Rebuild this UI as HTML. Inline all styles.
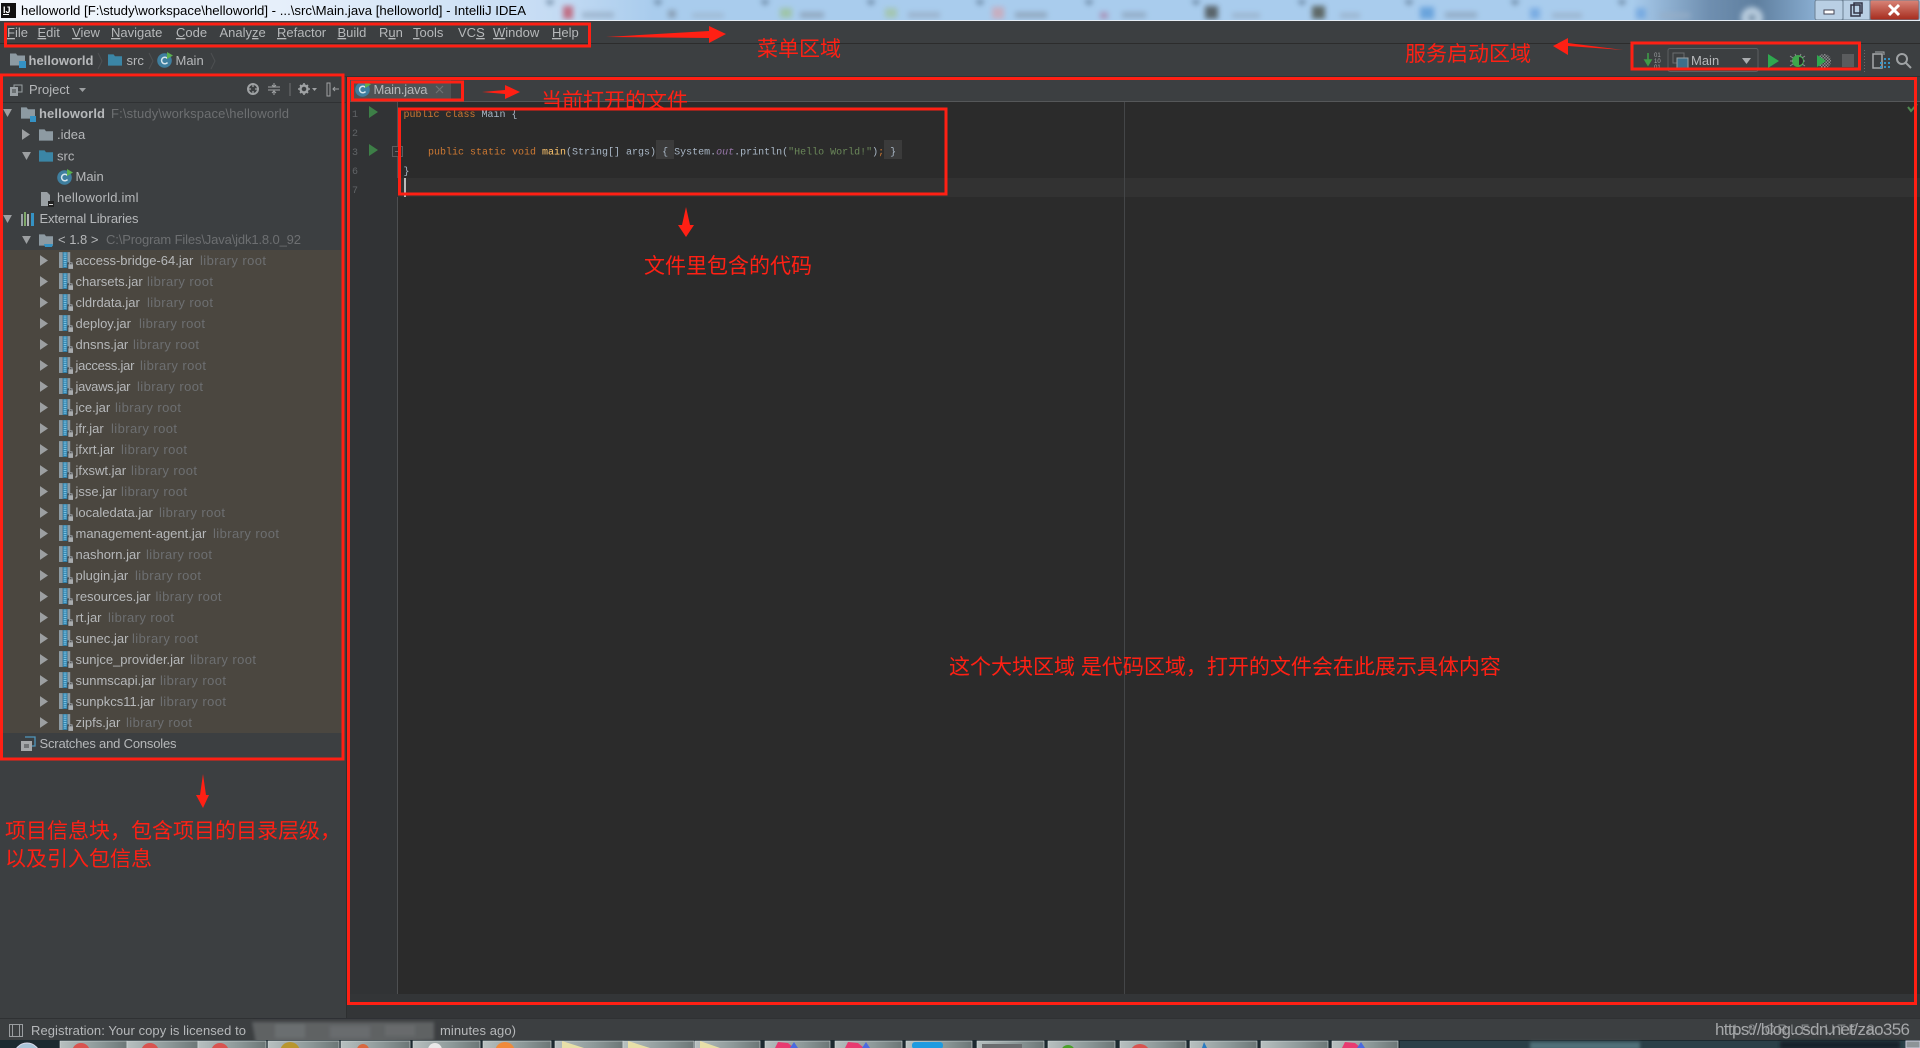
<!DOCTYPE html>
<html lang="zh-CN"><head><meta charset="utf-8"><title>IntelliJ IDEA</title>
<style>
html,body{margin:0;padding:0;width:1920px;height:1048px;overflow:hidden;background:#3c3f41}
svg{display:block;position:absolute;left:0;top:0}
text{font-family:"Liberation Sans","Noto Sans CJK SC",sans-serif;white-space:pre}
.t{font-size:13px;fill:#b6b8ba}
.g{font-size:13px;fill:#6d6f71}
#jars .g{letter-spacing:.42px;transform:translateY(-1px)}
#jars .t{transform:translateY(-1px)}
.m{font-size:13px;fill:#b6b8ba}
.u{text-decoration:underline}
.c{font-family:"Liberation Mono",monospace;font-size:10px;fill:#a9b7c6}
.k{fill:#cc7832}.n{font-family:"Liberation Mono",monospace;font-size:10px;fill:#606366}
.r{font-family:"Liberation Sans","Noto Sans CJK SC",sans-serif;font-size:21px;fill:#ff2014}
.b{fill:none;stroke:#ff2014;stroke-width:3}
</style></head><body>
<svg width="1920" height="1048" viewBox="0 0 1920 1048" xmlns="http://www.w3.org/2000/svg">
<defs>
<linearGradient id="tb" x1="0" x2="1" y1="0" y2="0">
<stop offset="0" stop-color="#f4f8fd"/><stop offset=".16" stop-color="#e4eefa"/><stop offset=".29" stop-color="#c4dbf3"/><stop offset=".34" stop-color="#a9cced"/><stop offset=".85" stop-color="#a9cced"/><stop offset=".89" stop-color="#6f8fb0"/><stop offset=".915" stop-color="#5f7f9f"/><stop offset=".95" stop-color="#8fb4d8"/><stop offset="1" stop-color="#a9cced"/>
</linearGradient>
<linearGradient id="btn" x1="0" x2="1" y1="0" y2="0"><stop offset="0" stop-color="#b7c0c0"/><stop offset=".6" stop-color="#8b9797"/><stop offset="1" stop-color="#6b7676"/></linearGradient>
<linearGradient id="cl" x1="0" x2="0" y1="0" y2="1"><stop offset="0" stop-color="#d9877a"/><stop offset="1" stop-color="#a52a1c"/></linearGradient>
<filter id="bl" x="-30%" y="-30%" width="160%" height="160%"><feGaussianBlur stdDeviation="1.6"/></filter>
<filter id="bl2" x="-10%" y="-100%" width="120%" height="300%"><feGaussianBlur stdDeviation="2.6"/></filter>
<pattern id="chk" width="3" height="3" patternUnits="userSpaceOnUse"><rect width="1.5" height="1.5" fill="#8a8d8f"/><rect x="1.5" y="1.5" width="1.5" height="1.5" fill="#8a8d8f"/></pattern>
<symbol id="fold" viewBox="0 0 15 12" overflow="visible"><path d="M0 0h6l1.5 2H15v10H0z"/></symbol>
<symbol id="ar" viewBox="0 0 9 12"><path d="M0 0l9 6-9 6z" fill="#9c9fa1"/></symbol>
<symbol id="ad" viewBox="0 0 10 9"><path d="M0 0h10L5 9z" fill="#9c9fa1"/></symbol>
<symbol id="jar" viewBox="0 0 15 18"><rect x="0" y="0" width="4" height="17" fill="#8d9aa2"/><rect x="9" y="0" width="3" height="17" fill="#8d9aa2"/><rect x="4" y="0" width="5" height="17" fill="#2f7fa8"/><path d="M5 1h3M5 3h3M5 5h3M5 7h3M5 9h3M5 11h3M5 13h3M5 15h3" stroke="#7fc4e4" stroke-width="1"/><rect x="9" y="11" width="6" height="7" fill="#3c3f41"/><rect x="10" y="13" width="5" height="5" fill="#a9acae"/><path d="M11 13v-1.5h3V13" fill="none" stroke="#a9acae"/></symbol>
<symbol id="cc" viewBox="0 0 16 16"><circle cx="7.5" cy="8.5" r="7.3" fill="#3f7f9f"/><path d="M10.5 6.5a3.3 3.3 0 1 0 0 4" fill="none" stroke="#d5e5ec" stroke-width="1.5"/><path d="M10 0l6 3.5-6 3.5z" fill="#5bb04f"/></symbol>
</defs>

<!-- title bar -->
<rect x="0" y="0" width="1920" height="20" fill="url(#tb)"/>
<g filter="url(#bl2)" opacity=".8">
<rect x="563" y="6" width="10" height="13" fill="#c0556a"/><rect x="582" y="12" width="32" height="6" fill="#98aec6"/><rect x="668" y="10" width="8" height="8" fill="#8295a8"/><rect x="692" y="13" width="32" height="5" fill="#9db5cd"/><rect x="780" y="8" width="12" height="10" fill="#9cc39a"/><rect x="800" y="12" width="24" height="6" fill="#8ba0b5"/><rect x="885" y="8" width="12" height="10" fill="#a3c5a4"/><rect x="908" y="12" width="32" height="6" fill="#98aec6"/><rect x="992" y="7" width="12" height="12" fill="#cfa7b5"/><rect x="1015" y="12" width="32" height="6" fill="#8ba0b5"/><rect x="1100" y="12" width="8" height="7" fill="#a98ab0"/><rect x="1122" y="12" width="24" height="6" fill="#8ea5bd"/><rect x="1205" y="6" width="13" height="13" fill="#44484a"/><rect x="1232" y="13" width="28" height="5" fill="#98aec6"/><rect x="1312" y="6" width="13" height="13" fill="#4c4f45"/><rect x="1340" y="13" width="20" height="5" fill="#98aec6"/><rect x="1420" y="7" width="14" height="12" fill="#5a9ad8"/><rect x="1445" y="12" width="32" height="6" fill="#8ea5bd"/><rect x="1530" y="8" width="10" height="11" fill="#6ea5e0"/><rect x="1552" y="13" width="30" height="5" fill="#98aec6"/><rect x="1636" y="8" width="10" height="11" fill="#6ea5e0"/><rect x="1660" y="13" width="30" height="5" fill="#98aec6"/><circle cx="1752" cy="18" r="11" fill="#cfe0ee"/><circle cx="1752" cy="18" r="4" fill="#7f98ae"/>
<path d="M545 0l5 6 5-6zM653 0l5 6 5-6zM760 0l5 6 5-6zM866 0l5 6 5-6zM975 0l5 6 5-6zM1084 0l5 6 5-6zM1191 0l5 6 5-6zM1297 0l5 6 5-6zM1404 0l5 6 5-6zM1510 0l5 6 5-6zM1617 0l5 6 5-6z" fill="#5c7690"/>
</g>
<rect x="1" y="3" width="15" height="15" fill="#111"/><text x="3" y="13" style="font-size:9px;font-weight:bold;fill:#fff">IJ</text><rect x="3" y="14" width="6" height="1" fill="#fff"/>
<text x="21" y="15" style="font-size:13px;fill:#000" textLength="505" lengthAdjust="spacingAndGlyphs">helloworld [F:\study\workspace\helloworld] - ...\src\Main.java [helloworld] - IntelliJ IDEA</text>
<!-- window controls -->
<rect x="1815" y="0" width="28" height="20" rx="2" fill="#b9cfe4" stroke="#6b7f92"/><rect x="1843" y="0" width="27" height="20" fill="#b9cfe4" stroke="#6b7f92"/><rect x="1870" y="0" width="49" height="20" rx="2" fill="url(#cl)" stroke="#6b7f92"/>
<rect x="1824" y="10" width="10" height="4" fill="#fff" stroke="#445"/><rect x="1851" y="5" width="9" height="11" fill="none" stroke="#334" stroke-width="1.5"/><rect x="1854" y="3" width="8" height="10" fill="none" stroke="#334" stroke-width="1.5"/>
<path d="M1889 5l10 10M1899 5l-10 10" stroke="#fff" stroke-width="3"/>
<rect x="0" y="20" width="1920" height="1" fill="#e6edf4"/>

<!-- chrome -->
<rect x="0" y="21" width="1920" height="1027" fill="#3c3f41"/>
<rect x="0" y="43" width="1920" height="1" fill="#2c2c2c"/>
<rect x="0" y="76" width="1920" height="1" fill="#313335"/>

<!-- menu -->
<g>
<text x="7" y="37" class="m"><tspan class="u">F</tspan>ile</text><text x="37.5" y="37" class="m"><tspan class="u">E</tspan>dit</text><text x="72" y="37" class="m"><tspan class="u">V</tspan>iew</text><text x="111" y="37" class="m"><tspan class="u">N</tspan>avigate</text><text x="176" y="37" class="m"><tspan class="u">C</tspan>ode</text><text x="219.5" y="37" class="m">Analy<tspan class="u">z</tspan>e</text><text x="277" y="37" class="m"><tspan class="u">R</tspan>efactor</text><text x="337.5" y="37" class="m"><tspan class="u">B</tspan>uild</text><text x="379" y="37" class="m">R<tspan class="u">u</tspan>n</text><text x="413" y="37" class="m"><tspan class="u">T</tspan>ools</text><text x="458" y="37" class="m">VC<tspan class="u">S</tspan></text><text x="493" y="37" class="m"><tspan class="u">W</tspan>indow</text><text x="552" y="37" class="m"><tspan class="u">H</tspan>elp</text>
</g>

<!-- nav bar -->
<use href="#fold" x="10" y="53" width="15" height="13" fill="#8d9aa2"/><rect x="19" y="61" width="7" height="7" fill="#3592c4"/>
<text x="28.5" y="65" class="t" style="font-weight:bold;font-size:13px" textLength="65">helloworld</text>
<path d="M98 53l4 8-4 8" fill="none" stroke="#4d5052"/>
<use href="#fold" x="108" y="54" width="14" height="12" fill="#3b86a6"/>
<text x="126.5" y="65" class="t">src</text>
<path d="M149 53l4 8-4 8" fill="none" stroke="#4d5052"/>
<use href="#cc" x="157" y="52" width="16" height="16"/>
<text x="175.5" y="65" class="t">Main</text>
<path d="M211 53l4 8-4 8" fill="none" stroke="#4d5052"/>

<!-- toolbar -->
<path d="M1648 53v10M1645 60l3 5 3-5z" stroke="#3f9a48" stroke-width="1.6" fill="#3f9a48"/>
<text x="1654" y="57" style="font-size:6px;fill:#a0a3a5">01</text><text x="1654" y="63" style="font-size:6px;fill:#a0a3a5">10</text><text x="1654" y="69" style="font-size:6px;fill:#a0a3a5">01</text>
<rect x="1668" y="48.5" width="90" height="23" rx="2" fill="#3c3f41" stroke="#5c5f61"/>
<rect x="1673" y="53" width="11" height="10" fill="none" stroke="#6a6d6f"/><rect x="1677" y="58" width="11" height="10" fill="#3f6f8a" stroke="#9aa0a4"/>
<text x="1691" y="65" class="t">Main</text>
<path d="M1742 58h9l-4.5 6z" fill="#a9acae"/>
<path d="M1768 54l11 7-11 7z" fill="#2fa84f"/>
<g><circle cx="1798" cy="61" r="6" fill="#3ea64b"/><path d="M1790 56l3 2M1790 61h3M1790 66l3-2M1805 56l-3 2M1805 61h-2M1805 66l-3-2M1795 54l1 2M1801 54l-1 2" stroke="#8a8d8f"/><path d="M1799 57a4 4 0 0 1 0 8z" fill="#2b2d2e"/></g>
<g><circle cx="1824" cy="61" r="7" fill="url(#chk)"/><path d="M1817 55l9 6-9 6z" fill="#2fa84f"/></g>
<rect x="1842" y="54" width="12" height="13" fill="#5a5c5e"/>
<path d="M1864.5 50v22" stroke="#66696b" stroke-dasharray="1 2"/>
<g><rect x="1873" y="54" width="9" height="14" fill="none" stroke="#a5a8aa" stroke-width="1.5"/><path d="M1875 52h9v3" fill="none" stroke="#a5a8aa"/><path d="M1884 58h2v2h-2zM1888 58h2v2h-2zM1884 62h2v2h-2zM1888 62h2v2h-2zM1884 66h2v2h-2zM1888 66h2v2h-2zM1880 62h2v2h-2zM1880 66h2v2h-2z" fill="#3592c4"/></g>
<g fill="none" stroke="#9fa2a4" stroke-width="2"><circle cx="1902" cy="59" r="5"/><path d="M1906 63l5 5"/></g>

<!-- left project header -->
<rect x="0" y="102" width="346" height="1" fill="#2f3133"/>
<g fill="none" stroke="#9aa0a4"><rect x="14" y="85" width="8" height="7"/></g><rect x="10" y="87" width="8" height="9" fill="#9aa0a4"/><path d="M12 90h4M12 92h4" stroke="#3c3f41"/>
<text x="29" y="94" class="t">Project</text>
<path d="M79 88h7l-3.5 4z" fill="#9c9fa1"/>
<g fill="none" stroke="#9fa2a4"><circle cx="253" cy="89" r="5" stroke-width="2"/><path d="M253 85v2M253 91v2M249 89h2M255 89h2" stroke-width="1.3"/><path d="M268 87h12M268 90h12M274 83v3M274 91v4M272 85l2 2 2-2M272 93l2-2 2 2" /><path d="M290 83v13" stroke="#6f7274"/><circle cx="304" cy="89" r="3.5" stroke-width="2.4"/><path d="M304 83v2M304 93v2M298 89h2M308 89h2M300 85l1.5 1.5M308 85l-1.5 1.5M300 93l1.5-1.5M308 93l-1.5-1.5" stroke-width="1.6"/><path d="M327 83h3v13h-3zM339 89h-6M335 87l-2 2 2 2"/></g>
<path d="M312 88h5l-2.5 3z" fill="#9fa2a4"/>

<!-- tree top -->
<use href="#ad" x="3" y="109" width="9" height="8"/>
<use href="#fold" x="21" y="107" width="14" height="12" fill="#8d9aa2"/><rect x="30" y="116" width="6" height="6" fill="#3592c4"/>
<text x="39" y="118" class="t" style="font-weight:bold" textLength="66">helloworld</text>
<text x="111" y="118" class="g" textLength="178">F:\study\workspace\helloworld</text>
<use href="#ar" x="22" y="129" width="8" height="11"/>
<use href="#fold" x="39" y="129" width="14" height="12" fill="#8d9aa2"/>
<text x="57" y="139" class="t">.idea</text>
<use href="#ad" x="22" y="152" width="9" height="8"/>
<use href="#fold" x="39" y="150" width="14" height="12" fill="#3b86a6"/>
<text x="57" y="160.5" class="t">src</text>
<use href="#cc" x="57" y="169" width="16" height="16"/>
<text x="75.5" y="181" class="t">Main</text>
<path d="M41 192h6l3 3v11h-9z" fill="#9aa0a4"/><rect x="48" y="201" width="6" height="6" fill="#222"/><rect x="49" y="204" width="4" height="1" fill="#ddd"/>
<text x="57" y="202" class="t" textLength="81.5">helloworld.iml</text>
<use href="#ad" x="3" y="215" width="9" height="8"/>
<path d="M21 214h2v12h-2z" fill="#9aa0a4"/><path d="M24 212h2v14h-2z" fill="#7fa86a"/><path d="M27 214h2v12h-2z" fill="#b3b5b7"/><path d="M31 213h3v13h-3z" fill="#3592c4"/>
<text x="39.5" y="223" class="t" textLength="99">External Libraries</text>
<use href="#ad" x="22" y="236" width="9" height="8"/>
<use href="#fold" x="39" y="234" width="14" height="12" fill="#8d9aa2"/><path d="M44 244h9l-1 3h-7z" fill="#3592c4"/>
<text x="58" y="244" class="t">&lt; 1.8 &gt;</text>
<text x="106" y="244" class="g" textLength="195">C:\Program Files\Java\jdk1.8.0_92</text>

<!-- library rows -->
<rect x="3" y="250" width="340" height="483" fill="#4b4740"/>
<g id="jars">
<use href="#ar" x="40" y="255" width="8" height="11"/><use href="#jar" x="59" y="252" width="14" height="17"/><text x="75.5" y="266" class="t">access-bridge-64.jar</text><text x="200" y="266" class="g">library root</text>
<use href="#ar" x="40" y="276" width="8" height="11"/><use href="#jar" x="59" y="273" width="14" height="17"/><text x="75.5" y="287" class="t">charsets.jar</text><text x="147" y="287" class="g">library root</text>
<use href="#ar" x="40" y="297" width="8" height="11"/><use href="#jar" x="59" y="294" width="14" height="17"/><text x="75.5" y="308" class="t">cldrdata.jar</text><text x="147" y="308" class="g">library root</text>
<use href="#ar" x="40" y="318" width="8" height="11"/><use href="#jar" x="59" y="315" width="14" height="17"/><text x="75.5" y="329" class="t">deploy.jar</text><text x="139" y="329" class="g">library root</text>
<use href="#ar" x="40" y="339" width="8" height="11"/><use href="#jar" x="59" y="336" width="14" height="17"/><text x="75.5" y="350" class="t">dnsns.jar</text><text x="133" y="350" class="g">library root</text>
<use href="#ar" x="40" y="360" width="8" height="11"/><use href="#jar" x="59" y="357" width="14" height="17"/><text x="75.5" y="371" class="t" textLength="59">jaccess.jar</text><text x="140" y="371" class="g">library root</text>
<use href="#ar" x="40" y="381" width="8" height="11"/><use href="#jar" x="59" y="378" width="14" height="17"/><text x="75.5" y="392" class="t" textLength="55">javaws.jar</text><text x="137" y="392" class="g">library root</text>
<use href="#ar" x="40" y="402" width="8" height="11"/><use href="#jar" x="59" y="399" width="14" height="17"/><text x="75.5" y="413" class="t">jce.jar</text><text x="115" y="413" class="g">library root</text>
<use href="#ar" x="40" y="423" width="8" height="11"/><use href="#jar" x="59" y="420" width="14" height="17"/><text x="75.5" y="434" class="t">jfr.jar</text><text x="111" y="434" class="g">library root</text>
<use href="#ar" x="40" y="444" width="8" height="11"/><use href="#jar" x="59" y="441" width="14" height="17"/><text x="75.5" y="455" class="t">jfxrt.jar</text><text x="121" y="455" class="g">library root</text>
<use href="#ar" x="40" y="465" width="8" height="11"/><use href="#jar" x="59" y="462" width="14" height="17"/><text x="75.5" y="476" class="t">jfxswt.jar</text><text x="131" y="476" class="g">library root</text>
<use href="#ar" x="40" y="486" width="8" height="11"/><use href="#jar" x="59" y="483" width="14" height="17"/><text x="75.5" y="497" class="t">jsse.jar</text><text x="121" y="497" class="g">library root</text>
<use href="#ar" x="40" y="507" width="8" height="11"/><use href="#jar" x="59" y="504" width="14" height="17"/><text x="75.5" y="518" class="t">localedata.jar</text><text x="159" y="518" class="g">library root</text>
<use href="#ar" x="40" y="528" width="8" height="11"/><use href="#jar" x="59" y="525" width="14" height="17"/><text x="75.5" y="539" class="t">management-agent.jar</text><text x="213" y="539" class="g">library root</text>
<use href="#ar" x="40" y="549" width="8" height="11"/><use href="#jar" x="59" y="546" width="14" height="17"/><text x="75.5" y="560" class="t">nashorn.jar</text><text x="146" y="560" class="g">library root</text>
<use href="#ar" x="40" y="570" width="8" height="11"/><use href="#jar" x="59" y="567" width="14" height="17"/><text x="75.5" y="581" class="t">plugin.jar</text><text x="135" y="581" class="g">library root</text>
<use href="#ar" x="40" y="591" width="8" height="11"/><use href="#jar" x="59" y="588" width="14" height="17"/><text x="75.5" y="602" class="t">resources.jar</text><text x="155.5" y="602" class="g">library root</text>
<use href="#ar" x="40" y="612" width="8" height="11"/><use href="#jar" x="59" y="609" width="14" height="17"/><text x="75.5" y="623" class="t">rt.jar</text><text x="108" y="623" class="g">library root</text>
<use href="#ar" x="40" y="633" width="8" height="11"/><use href="#jar" x="59" y="630" width="14" height="17"/><text x="75.5" y="644" class="t" textLength="53">sunec.jar</text><text x="132" y="644" class="g">library root</text>
<use href="#ar" x="40" y="654" width="8" height="11"/><use href="#jar" x="59" y="651" width="14" height="17"/><text x="75.5" y="665" class="t">sunjce_provider.jar</text><text x="190" y="665" class="g">library root</text>
<use href="#ar" x="40" y="675" width="8" height="11"/><use href="#jar" x="59" y="672" width="14" height="17"/><text x="75.5" y="686" class="t">sunmscapi.jar</text><text x="160" y="686" class="g">library root</text>
<use href="#ar" x="40" y="696" width="8" height="11"/><use href="#jar" x="59" y="693" width="14" height="17"/><text x="75.5" y="707" class="t">sunpkcs11.jar</text><text x="160" y="707" class="g">library root</text>
<use href="#ar" x="40" y="717" width="8" height="11"/><use href="#jar" x="59" y="714" width="14" height="17"/><text x="75.5" y="728" class="t">zipfs.jar</text><text x="126" y="728" class="g">library root</text>
</g>
<rect x="21" y="741" width="11" height="10" fill="#a6a9ab"/><path d="M25 737h10v9h-3" fill="none" stroke="#4f96bd" stroke-width="1.3"/><path d="M24 745h5M24 747h5" stroke="#3c3f41"/>
<text x="39.5" y="748" class="t" textLength="137">Scratches and Consoles</text>

<!-- editor -->
<rect x="346" y="77" width="1" height="941" fill="#2d2f30"/>
<rect x="347" y="101" width="1573" height="1" fill="#555759"/>
<rect x="347" y="102" width="1573" height="892" fill="#2b2b2b"/>
<rect x="347" y="102" width="50" height="892" fill="#313335"/>
<rect x="397" y="102" width="1" height="892" fill="#4d4f51"/>
<rect x="397" y="178" width="1523" height="19" fill="#323232"/>
<rect x="1124" y="102" width="1" height="892" fill="#444648"/>
<rect x="347" y="994" width="1573" height="24" fill="#333537"/>
<rect x="0" y="1018" width="1920" height="1" fill="#2f3133"/>
<!-- tab -->
<rect x="349" y="80" width="102" height="21" fill="#4e5254"/>
<use href="#cc" x="355" y="81" width="16" height="16"/>
<text x="373.5" y="94" class="t" textLength="54">Main.java</text>
<path d="M436 86l7 7M443 86l-7 7" stroke="#6f7274" stroke-width="1.2"/>
<!-- gutter -->
<text x="352" y="117" class="n">1</text><text x="352" y="136" class="n">2</text><text x="352" y="155" class="n">3</text><text x="352" y="174" class="n">6</text><text x="352" y="193" class="n">7</text>
<path d="M369 106l9 6-9 6z" fill="#3d7f47"/><path d="M369 144l9 6-9 6z" fill="#3d7f47"/>
<rect x="392.5" y="146.5" width="10" height="10" fill="#323436" stroke="#5a5d5f"/><path d="M395 151.5h5" stroke="#6a6d6f"/>
<rect x="656" y="140" width="18" height="19" fill="#3b3b3b"/><rect x="884" y="140" width="18" height="19" fill="#3b3b3b"/>
<!-- code -->
<text x="403.5" y="117" class="c"><tspan class="k">public class </tspan>Main {</text>
<text x="428" y="154.5" class="c"><tspan class="k">public static void </tspan><tspan fill="#ffc66d">main</tspan>(String[] args) { System.<tspan fill="#9876aa" font-style="italic">out</tspan>.println(<tspan fill="#6a8759">"Hello World!"</tspan>)<tspan class="k">;</tspan> }</text>
<text x="403.5" y="174" class="c">}</text>
<rect x="404" y="178" width="2" height="19" fill="#bbbbbb"/>
<path d="M1908 107l3 4 6-7" fill="none" stroke="#4f8a4f" stroke-width="2"/>

<!-- status -->
<rect x="9.5" y="1024.5" width="13" height="12" fill="none" stroke="#9a9da0"/><path d="M12.5 1025v11M19.5 1025v11" stroke="#9a9da0"/>
<text x="31" y="1035" class="t" textLength="215">Registration: Your copy is licensed to</text>
<g filter="url(#bl)"><path d="M252 1022h182v18l-60 3-90 2-28-1z" fill="#5f6264"/><rect x="275" y="1024" width="30" height="14" fill="#6b6e70"/><rect x="330" y="1026" width="40" height="12" fill="#696c6e"/><rect x="385" y="1025" width="30" height="11" fill="#676a6c"/></g>
<text x="440" y="1035" class="t" textLength="76">minutes ago)</text>
<text x="1731" y="1034" style="font-size:14px;fill:#85888a" textLength="150">1:8 CRLF: UTF-8:</text>
<text x="1715" y="1035" style="font-size:17px;fill:#a4a6a8" textLength="195">https://blog.csdn.net/zao356</text>

<!-- taskbar -->
<rect x="0" y="1040" width="1920" height="8" fill="#1c2a30"/>
<rect x="1400" y="1041" width="520" height="7" fill="#2b4048"/>
<g filter="url(#bl)"><rect x="1530" y="1042" width="110" height="8" fill="#4f6f78"/><rect x="1780" y="1041" width="120" height="8" fill="#15232a"/></g>
<circle cx="27" cy="1056" r="13" fill="#a9c5d8" stroke="#dde"/>
<g fill="url(#btn)" stroke="#d8dede" stroke-width=".6">
<rect x="60" y="1041" width="67" height="8"/><rect x="127" y="1041" width="71" height="8"/><rect x="198" y="1041" width="68" height="8"/><rect x="268" y="1041" width="71" height="8"/><rect x="341" y="1041" width="69" height="8"/><rect x="413" y="1041" width="67" height="8"/><rect x="483" y="1041" width="68" height="8"/><rect x="555" y="1041" width="68" height="8"/><rect x="623" y="1041" width="71" height="8"/><rect x="695" y="1041" width="65" height="8"/><rect x="765" y="1041" width="65" height="8"/><rect x="835" y="1041" width="67" height="8"/><rect x="906" y="1041" width="66" height="8"/><rect x="977" y="1041" width="67" height="8"/><rect x="1048" y="1041" width="67" height="8"/><rect x="1120" y="1041" width="66" height="8"/><rect x="1190" y="1041" width="67" height="8"/><rect x="1261" y="1041" width="67" height="8"/><rect x="1332" y="1041" width="66" height="8"/>
</g>
<circle cx="81" cy="1052" r="9" fill="#d9534f"/><circle cx="150" cy="1052" r="9" fill="#d9534f"/><circle cx="220" cy="1052" r="9" fill="#d9534f"/><circle cx="290" cy="1052" r="10" fill="#b8962e"/><circle cx="363" cy="1050" r="6" fill="#d9683f"/><circle cx="435" cy="1050" r="7" fill="#e8e8e8"/><circle cx="505" cy="1052" r="10" fill="#f08a3a"/><path d="M562 1041l22 7h-22zM628 1041l22 7h-22zM700 1041l20 7h-20z" fill="#e8dfa8"/><path d="M775 1048l3-6 10 1 6 5zM845 1048l3-6 10 1 6 5z" fill="#e83a70"/><path d="M790 1048l4-6 4 6zM862 1048l4-6 4 6z" fill="#4a6ae0"/><rect x="912" y="1042" width="31" height="7" rx="3" fill="#1e9be0"/><rect x="982" y="1044" width="40" height="4" fill="#6a6d6f"/><circle cx="1068" cy="1052" r="7" fill="#4aa02a"/><circle cx="1140" cy="1054" r="10" fill="#d9534f"/><path d="M1204 1042l3 6h-5z" fill="#2a7ac0"/><path d="M1342 1048l3-6 10 1 6 5z" fill="#e83a70"/><path d="M1357 1048l4-6 4 6z" fill="#4a6ae0"/>
<rect x="1906" y="1041" width="14" height="7" fill="#8d9397" stroke="#ccd"/>

<!-- annotations: boxes -->
<rect class="b" x="5.5" y="24" width="584" height="22"/>
<rect class="b" x="1.5" y="75" width="341.5" height="684"/>
<rect class="b" x="348.5" y="78.5" width="1567" height="925"/>
<rect class="b" x="352.5" y="82" width="110" height="18"/>
<rect class="b" x="399.5" y="109" width="546.5" height="85"/>
<rect class="b" x="1632" y="43" width="227.5" height="26"/>
<!-- arrows -->
<path d="M606 37L709 31V26L726 34L709 43V38Z" fill="#ff2014"/>
<path d="M1623 50L1568 46V55L1553 46L1568 38V43Z" fill="#ff2014"/>
<path d="M482 92L505 90V85L520 92L505 99V94Z" fill="#ff2014"/>
<path d="M686 207L690 225H694L686 237L678 225H682Z" fill="#ff2014"/>
<path d="M203 774L206 795H209L203 808L196 795H200Z" fill="#ff2014"/>
<!-- annotations: text -->
<text x="757" y="56" class="r">菜单区域</text>
<text x="1405" y="61" class="r">服务启动区域</text>
<text x="541" y="108" class="r">当前打开的文件</text>
<text x="644" y="273" class="r">文件里包含的代码</text>
<text x="949" y="674" class="r">这个大块区域 是代码区域，打开的文件会在此展示具体内容</text>
<text x="5" y="838" class="r">项目信息块，包含项目的目录层级，</text>
<text x="5" y="866" class="r">以及引入包信息</text>
</svg>
</body></html>
